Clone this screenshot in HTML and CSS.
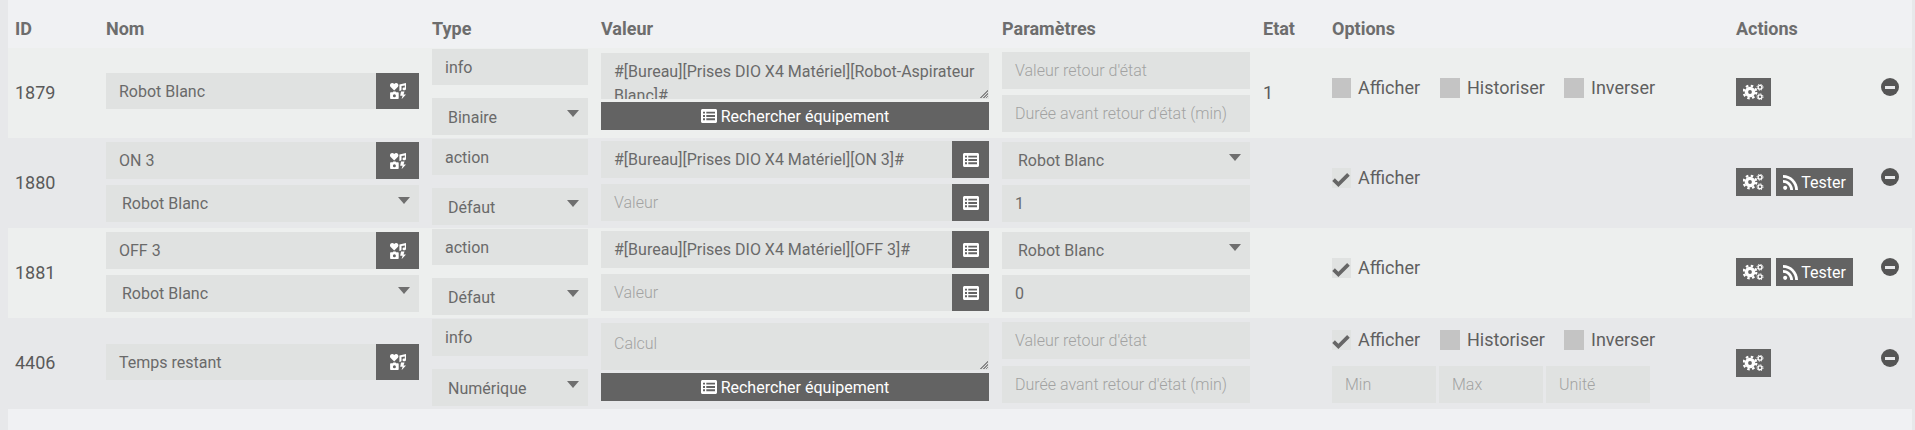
FILE: index.html
```html
<!DOCTYPE html>
<html lang="fr">
<head>
    <meta charset="UTF-8">
    <title>Commandes</title>
    <link rel="stylesheet" href="styles.css">
</head>
<body>

    <svg class="icon-defs" width="0" height="0" aria-hidden="true">
        <symbol id="i-icons" viewBox="0 0 16 16">
            <path d="M4.200 7.600 .4 3.700C-.7 2.200.4 0 2.200 0c.8 0 1.500.4 2 1 .5-.6 1.200-1 2-1C8 0 9.100 2.200 8 3.700z"/>
            <path d="M16 0V5.800c0 1-.9 1.500-1.800 1.500s-1.700-.5-1.700-1.400.8-1.400 1.700-1.400c.2 0 .4 0 .6.100V2.400L11.500 3.100V6.500c0 1-.9 1.400-2.100 1.400V1.400z"/>
            <path d="M2.800 9.300 3.300 8.400h2.300l.5.900H8c.4 0 .7.300.7.700v5.200c0 .4-.3.700-.7.700H.8c-.4 0-.7-.3-.7-.7V10c0-.4.300-.7.700-.7zM4.400 14.300a1.500 1.500 0 1 0 0-3 1.500 1.500 0 0 0 0 3z"/>
            <path d="M11 8.400h3.500l-1 3h2.500L11.600 16.200l1-3.400H10.200z"/>
        </symbol>
        <symbol id="i-list" viewBox="0 0 16 14">
            <path fill-rule="evenodd" d="M1.500 0h13c.8 0 1.500.7 1.500 1.500v11c0 .8-.7 1.500-1.500 1.500h-13C.7 14 0 13.300 0 12.500v-11C0 .7.700 0 1.500 0zM2 2.700v1.900h2V2.700zM5.300 2.700v1.900H14V2.700zM2 6v1.900h2V6zM5.300 6v1.900H14V6zM2 9.300v1.900h2V9.300zM5.300 9.300v1.900H14V9.300z"/>
        </symbol>
        <symbol id="i-cogs" viewBox="0 0 21 16">
            <circle cx="7" cy="8" r="3.600" fill="none" stroke="currentColor" stroke-width="3.400"/>
            <circle cx="7" cy="8" r="6.300" fill="none" stroke="currentColor" stroke-width="2.200" stroke-dasharray="2.500 2.450"/>
            <circle cx="17" cy="3.200" r="1.900" fill="none" stroke="currentColor" stroke-width="1.300"/>
            <circle cx="17" cy="3.200" r="3" fill="none" stroke="currentColor" stroke-width="1" stroke-dasharray="1.300 1.060"/>
            <circle cx="17" cy="12.800" r="1.900" fill="none" stroke="currentColor" stroke-width="1.300"/>
            <circle cx="17" cy="12.800" r="3" fill="none" stroke="currentColor" stroke-width="1" stroke-dasharray="1.300 1.060"/>
        </symbol>
        <symbol id="i-rss" viewBox="0 0 16 16">
            <circle cx="2.300" cy="13.700" r="2.200"/>
            <path d="M0 5.300v3c4.100 0 7.700 3.600 7.700 7.700h3C10.700 10.100 5.900 5.300 0 5.300z"/>
            <path d="M0 0v3c7.100 0 13 5.900 13 13h3C16 7.200 8.800 0 0 0z"/>
        </symbol>
    </svg>

    <div class="cmd-table">
        <div class="cmd-head">
            <div>ID</div>
            <div>Nom</div>
            <div>Type</div>
            <div>Valeur</div>
            <div>Paramètres</div>
            <div>Etat</div>
            <div>Options</div>
            <div>Actions</div>
            <div></div>
        </div>

        <!-- 1879 -->
        <div class="cmd-row odd">
            <div class="cell-id">1879</div>
            <div class="cell pad-25">
                <div class="field-group short">
                    <div class="field">Robot Blanc</div>
                    <div class="addon addon-wide"><svg class="ic ic-icons"><use href="#i-icons"/></svg></div>
                </div>
            </div>
            <div class="cell cell-type pad-1">
                <div class="field">info</div>
                <div class="field select">Binaire</div>
            </div>
            <div class="cell pad-5 gap-3">
                <div class="textarea">#[Bureau][Prises DIO X4 Matériel][Robot-Aspirateur Blanc]#</div>
                <div class="btn-wide"><svg class="ic ic-list"><use href="#i-list"/></svg>Rechercher équipement</div>
            </div>
            <div class="cell pad-4 gap-6">
                <div class="field holder">Valeur retour d'état</div>
                <div class="field holder">Durée avant retour d'état (min)</div>
            </div>
            <div class="cell-etat">1</div>
            <div class="cell pad-30">
                <div class="options">
                    <span class="check check-first"></span><span class="opt opt-first">Afficher</span>
                    <span class="check"></span><span class="opt opt-second">Historiser</span>
                    <span class="check"></span><span class="opt">Inverser</span>
                </div>
            </div>
            <div class="cell pad-30">
                <div class="actions">
                    <div class="btn-icon"><svg class="ic ic-cogs"><use href="#i-cogs"/></svg></div>
                </div>
            </div>
            <div class="cell pad-30"><span class="remove"></span></div>
        </div>

        <!-- 1880 -->
        <div class="cmd-row even">
            <div class="cell-id">1880</div>
            <div class="cell pad-4 gap-6">
                <div class="field-group">
                    <div class="field">ON 3</div>
                    <div class="addon addon-wide"><svg class="ic ic-icons"><use href="#i-icons"/></svg></div>
                </div>
                <div class="field select">Robot Blanc</div>
            </div>
            <div class="cell cell-type pad-1">
                <div class="field">action</div>
                <div class="field select">Défaut</div>
            </div>
            <div class="cell pad-3 gap-6">
                <div class="field-group">
                    <div class="field">#[Bureau][Prises DIO X4 Matériel][ON 3]#</div>
                    <div class="addon"><svg class="ic ic-list"><use href="#i-list"/></svg></div>
                </div>
                <div class="field-group">
                    <div class="field holder">Valeur</div>
                    <div class="addon"><svg class="ic ic-list"><use href="#i-list"/></svg></div>
                </div>
            </div>
            <div class="cell pad-4 gap-6">
                <div class="field select">Robot Blanc</div>
                <div class="field">1</div>
            </div>
            <div class="cell-etat"></div>
            <div class="cell pad-30">
                <div class="options">
                    <span class="check check-first checked"><svg class="tick" viewBox="0 0 20 16"><path d="M0 9 3 6l4 4 10-10 3 3L7 16z"/></svg></span><span class="opt">Afficher</span>
                </div>
            </div>
            <div class="cell pad-30">
                <div class="actions">
                    <div class="btn-icon"><svg class="ic ic-cogs"><use href="#i-cogs"/></svg></div>
                    <div class="btn-icon btn-test"><svg class="ic ic-rss"><use href="#i-rss"/></svg>Tester</div>
                </div>
            </div>
            <div class="cell pad-30"><span class="remove"></span></div>
        </div>

        <!-- 1881 -->
        <div class="cmd-row odd">
            <div class="cell-id">1881</div>
            <div class="cell pad-4 gap-6">
                <div class="field-group">
                    <div class="field">OFF 3</div>
                    <div class="addon addon-wide"><svg class="ic ic-icons"><use href="#i-icons"/></svg></div>
                </div>
                <div class="field select">Robot Blanc</div>
            </div>
            <div class="cell cell-type pad-1">
                <div class="field">action</div>
                <div class="field select">Défaut</div>
            </div>
            <div class="cell pad-3 gap-6">
                <div class="field-group">
                    <div class="field">#[Bureau][Prises DIO X4 Matériel][OFF 3]#</div>
                    <div class="addon"><svg class="ic ic-list"><use href="#i-list"/></svg></div>
                </div>
                <div class="field-group">
                    <div class="field holder">Valeur</div>
                    <div class="addon"><svg class="ic ic-list"><use href="#i-list"/></svg></div>
                </div>
            </div>
            <div class="cell pad-4 gap-6">
                <div class="field select">Robot Blanc</div>
                <div class="field">0</div>
            </div>
            <div class="cell-etat"></div>
            <div class="cell pad-30">
                <div class="options">
                    <span class="check check-first checked"><svg class="tick" viewBox="0 0 20 16"><path d="M0 9 3 6l4 4 10-10 3 3L7 16z"/></svg></span><span class="opt">Afficher</span>
                </div>
            </div>
            <div class="cell pad-30">
                <div class="actions">
                    <div class="btn-icon"><svg class="ic ic-cogs"><use href="#i-cogs"/></svg></div>
                    <div class="btn-icon btn-test"><svg class="ic ic-rss"><use href="#i-rss"/></svg>Tester</div>
                </div>
            </div>
            <div class="cell pad-30"><span class="remove"></span></div>
        </div>

        <!-- 4406 -->
        <div class="cmd-row even last">
            <div class="cell-id">4406</div>
            <div class="cell pad-26">
                <div class="field-group short">
                    <div class="field">Temps restant</div>
                    <div class="addon addon-wide"><svg class="ic ic-icons"><use href="#i-icons"/></svg></div>
                </div>
            </div>
            <div class="cell cell-type pad-1">
                <div class="field">info</div>
                <div class="field select">Numérique</div>
            </div>
            <div class="cell pad-5 gap-3">
                <div class="textarea holder">Calcul</div>
                <div class="btn-wide"><svg class="ic ic-list"><use href="#i-list"/></svg>Rechercher équipement</div>
            </div>
            <div class="cell pad-4 gap-7">
                <div class="field holder">Valeur retour d'état</div>
                <div class="field holder">Durée avant retour d'état (min)</div>
            </div>
            <div class="cell-etat"></div>
            <div class="cell pad-12">
                <div class="options">
                    <span class="check check-first checked"><svg class="tick" viewBox="0 0 20 16"><path d="M0 9 3 6l4 4 10-10 3 3L7 16z"/></svg></span><span class="opt opt-first">Afficher</span>
                    <span class="check"></span><span class="opt opt-second">Historiser</span>
                    <span class="check"></span><span class="opt">Inverser</span>
                </div>
                <div class="min-max">
                    <div class="field holder">Min</div>
                    <div class="field holder">Max</div>
                    <div class="field holder">Unité</div>
                </div>
            </div>
            <div class="cell pad-31">
                <div class="actions">
                    <div class="btn-icon"><svg class="ic ic-cogs"><use href="#i-cogs"/></svg></div>
                </div>
            </div>
            <div class="cell pad-31"><span class="remove"></span></div>
        </div>
    </div>

</body>
</html>
```

FILE: styles.css
```css
/* Page */
html, body {
    height: 100%;
}

body {
    margin: 0;
    background-color: #e7e8ea;
    font-family: "Roboto", sans-serif;
    font-size: 16px;
    color: #6a6a6a;
    overflow: hidden;
}

.icon-defs {
    display: block;
    height: 0;
}

.cmd-table {
    margin: 0 3px 0 8px;
    height: 430px;
    background-color: #f0f1f3;
}

/* Shared column widths for head and rows */
.cmd-head,
.cmd-row {
    display: grid;
    grid-template-columns: 98px 326px 169px 401px 261px 69px 404px 145px 31px;
}

.cmd-head {
    height: 48px;
    box-sizing: border-box;
    padding: 18px 0 0 7px;
    font-size: 18px;
    font-weight: 700;
    line-height: 21px;
    color: #6d6d6d;
    grid-template-columns: 91px 326px 169px 401px 261px 69px 404px 145px 31px;
}

.cmd-row {
    height: 90px;
}

.cmd-row.odd {
    background-color: #edefee;
}

.cmd-row.even {
    background-color: #e7e8ea;
    margin: 0 -3px 0 -8px;
    padding: 0 3px 0 8px;
}

.cmd-row.last {
    height: 91px;
}

.cell-id {
    padding: 34px 0 0 7px;
    font-size: 18px;
    line-height: 21px;
    color: #5a5a5a;
}

.cell-etat {
    padding-top: 34px;
    font-size: 18px;
    line-height: 21px;
    color: #5a5a5a;
}

/* Cells are stacks of fields, the top padding sets where the stack starts */
.cell {
    display: flex;
    flex-direction: column;
    padding-right: 13px;
}

.cell-type {
    gap: 13px;
}

.cell-type .field:first-child {
    height: 36px;
    line-height: 37px;
}

.cell-type .select {
    line-height: 39px;
}

.last .cell-type .field:first-child {
    height: 37px;
    line-height: 38px;
}

.pad-1 { padding-top: 1px; }
.pad-3 { padding-top: 3px; }
.pad-4 { padding-top: 4px; }
.pad-5 { padding-top: 5px; }
.pad-12 { padding-top: 12px; }
.pad-25 { padding-top: 25px; }
.pad-26 { padding-top: 26px; }
.pad-30 { padding-top: 30px; }
.pad-31 { padding-top: 31px; }
.gap-3 { gap: 3px; }
.gap-6 { gap: 6px; }
.gap-7 { gap: 7px; }

.field {
    box-sizing: border-box;
    height: 37px;
    padding: 0 13px;
    line-height: 37px;
    background-color: #e0e2e1;
    color: #6a6a6a;
    white-space: nowrap;
    overflow: hidden;
}

.field.holder,
.textarea.holder {
    color: #a2a2a2;
    font-weight: 300;
}

.select {
    position: relative;
    padding-left: 16px;
}

/* dropdown arrow */
.select::after {
    content: "";
    position: absolute;
    top: 12px;
    right: 9px;
    border-left: 6px solid transparent;
    border-right: 6px solid transparent;
    border-top: 7px solid #6f6f6f;
}

.field-group {
    display: flex;
}

.field-group .field {
    flex: 1;
    min-width: 0;
}

.short .field {
    height: 36px;
    line-height: 37px;
}

.addon {
    flex: none;
    width: 37px;
    display: flex;
    align-items: center;
    justify-content: center;
    background-color: #636363;
    color: #fff;
}

.addon-wide {
    width: 43px;
}

.ic {
    fill: currentColor;
    flex: none;
}

.ic-icons { width: 16px; height: 16px; }
.ic-list { width: 16px; height: 14px; }
.ic-cogs { width: 21px; height: 16px; }
.ic-rss { width: 15px; height: 15px; margin-right: 3px; }

.textarea {
    box-sizing: border-box;
    height: 46px;
    padding: 7px 13px 0;
    line-height: 24px;
    background-color: #e0e2e1;
    overflow: hidden;
    position: relative;
}

.last .textarea {
    height: 47px;
    padding-top: 9px;
}

/* resize grip */
.textarea::after {
    content: "";
    position: absolute;
    right: 1px;
    bottom: 1px;
    width: 9px;
    height: 9px;
    background: repeating-linear-gradient(135deg, transparent 0 1px, #8a8a8a 1px 2px);
    clip-path: polygon(100% 0, 100% 100%, 0 100%);
}

.btn-wide {
    display: flex;
    align-items: center;
    justify-content: center;
    height: 28px;
    background-color: #636363;
    color: #fff;
}

.btn-wide .ic-list {
    margin-right: 4px;
}

/* Options */
.options {
    display: flex;
    align-items: flex-start;
    height: 20px;
}

.check {
    flex: none;
    width: 20px;
    height: 20px;
    background-color: #c4c4c4;
    position: relative;
}

.check-first {
    width: 19px;
}

.check.checked {
    background-color: #e0e2e1;
}

.tick {
    position: absolute;
    left: 0;
    top: 5px;
    width: 18px;
    height: 14px;
    fill: #666;
}

/* labels are cut at a fixed width */
.opt {
    flex: none;
    box-sizing: border-box;
    width: 72px;
    padding-left: 7px;
    font-size: 18px;
    line-height: 20px;
    color: #5f5f5f;
    white-space: nowrap;
    overflow: hidden;
}

.opt-first { margin-right: 17px; }
.opt-second { width: 88px; margin-right: 16px; }

.min-max {
    display: flex;
    gap: 3px;
    margin-top: 16px;
}

.min-max .field {
    width: 104px;
}

/* Actions */
.actions {
    display: flex;
    gap: 5px;
}

.btn-icon {
    display: flex;
    align-items: center;
    justify-content: center;
    height: 28px;
    width: 35px;
    box-sizing: border-box;
    background-color: #636363;
    color: #fff;
}

.btn-test {
    width: 77px;
}

/* Remove, a minus in a dark disc */
.remove {
    display: block;
    width: 18px;
    height: 18px;
    border-radius: 50%;
    background-color: #555;
    position: relative;
}

.remove::after {
    content: "";
    position: absolute;
    left: 4px;
    top: 7.500px;
    width: 10px;
    height: 3px;
    background-color: #e7e8ea;
}
```
